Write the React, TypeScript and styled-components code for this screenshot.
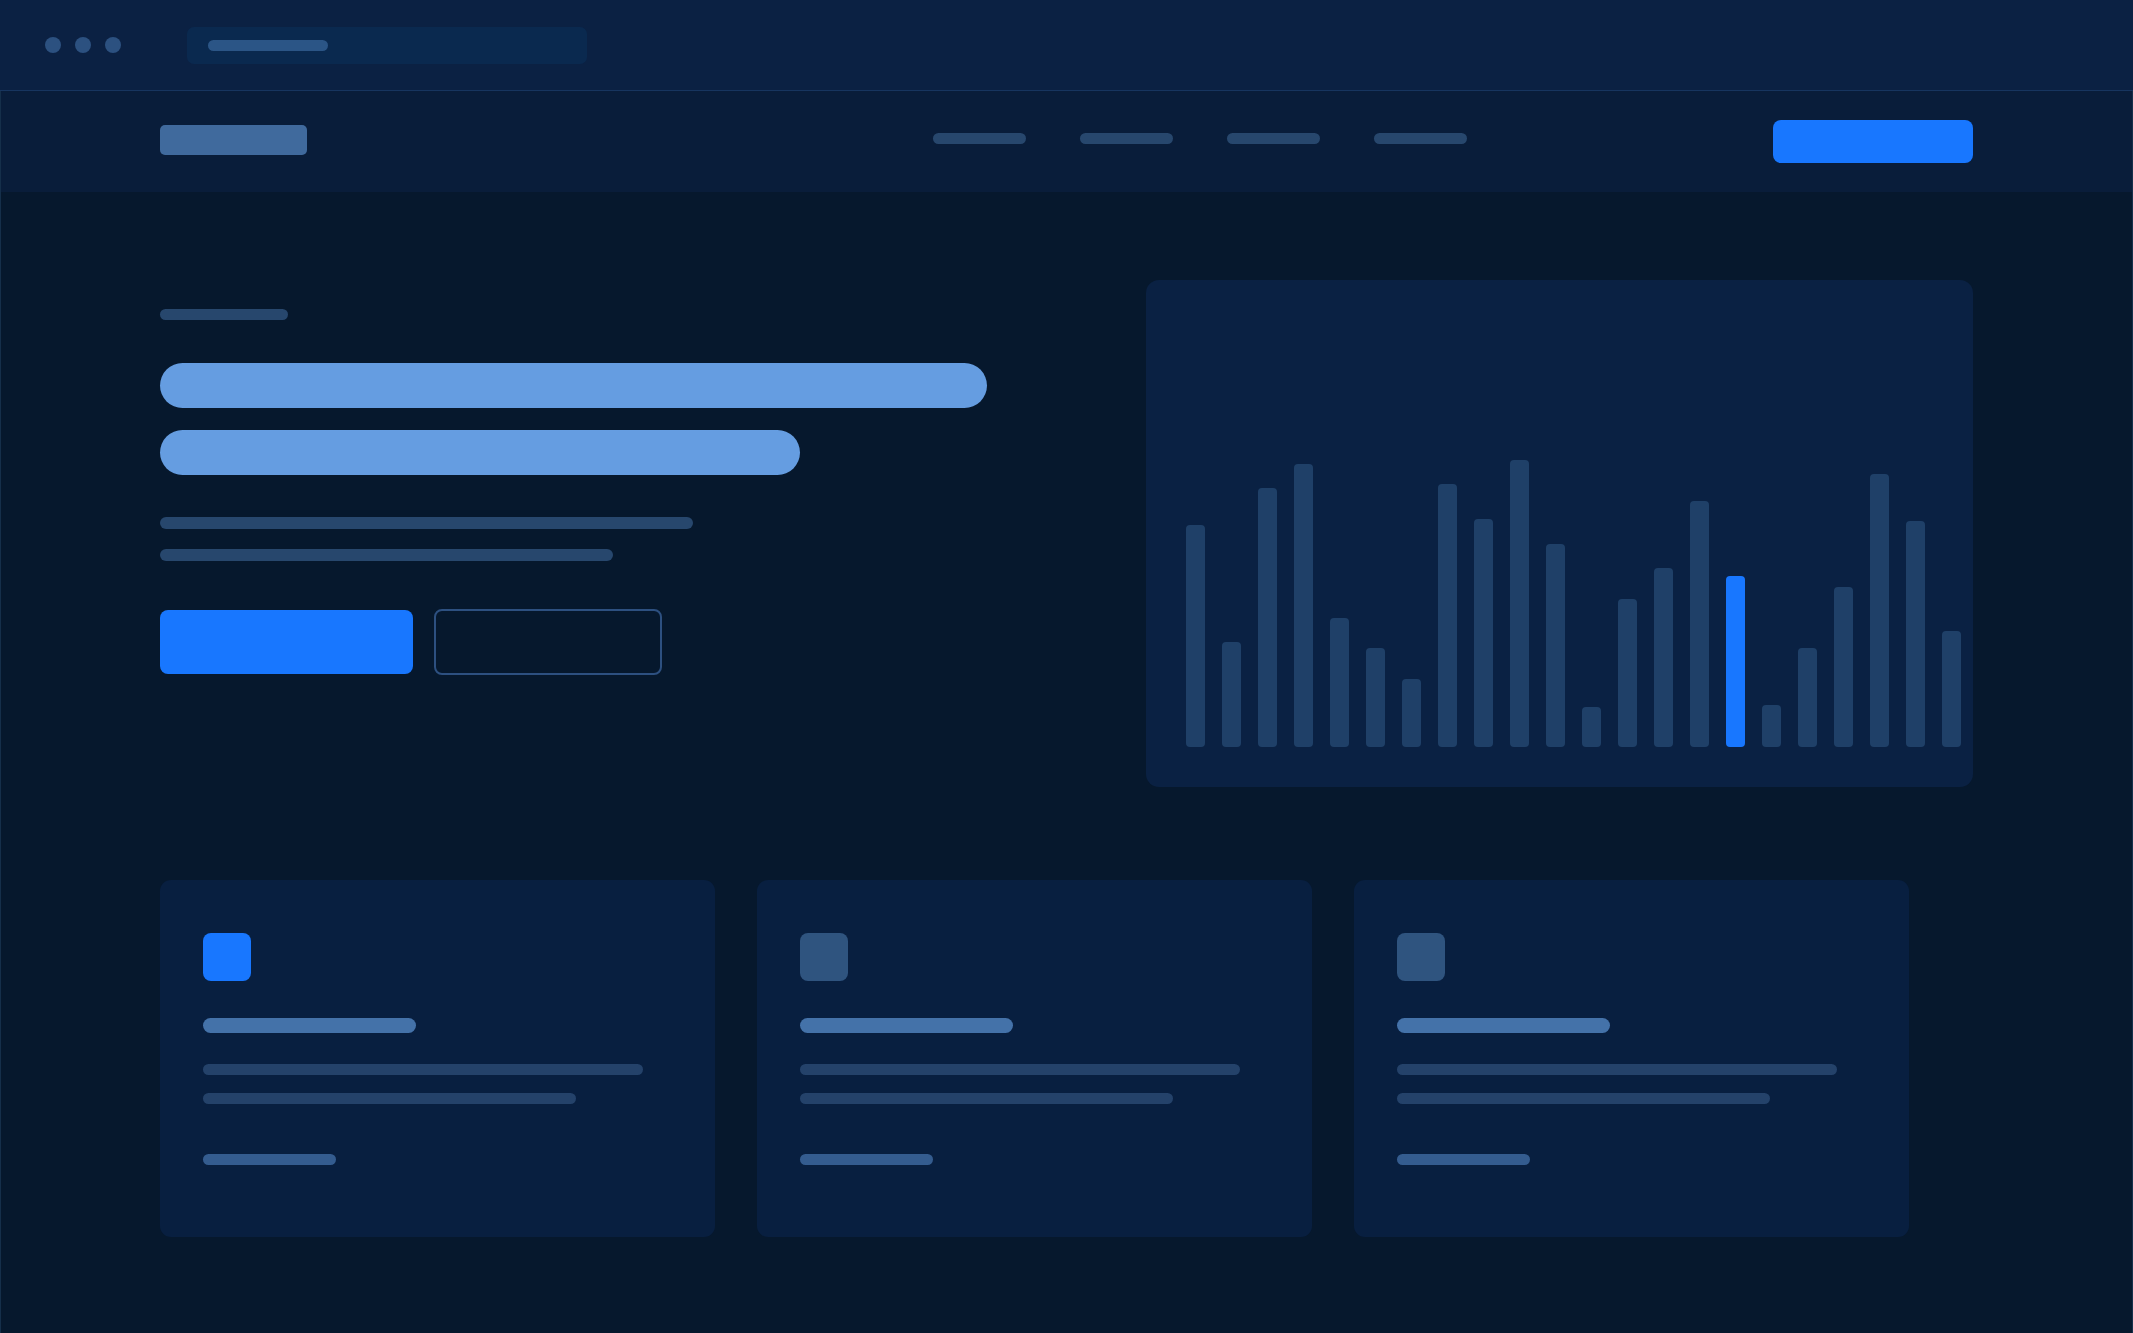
import React from "react";
import styled, { createGlobalStyle } from "styled-components";

const colors = {
  page: "#06182d",
  chrome: "#0b2143",
  divider: "#17355f",
  edge: "#152f4a",
  address: "#0a294f",
  nav: "#091d3a",
  panel: "#0a2143",
  card: "#081f40",
  accent: "#1877ff",
  heading: "#659de1",
  title: "#4472a9",
  logo: "#406a9d",
  link: "#345c8f",
  dot: "#2c5180",
  icon: "#2f547f",
  addressText: "#2b5586",
  muted: "#27476d",
  cardText: "#24426a",
  column: "#1f4068",
  outline: "#2d5080",
};

const GlobalStyle = createGlobalStyle`
  *, *::before, *::after { box-sizing: border-box; }
  body {
    margin: 0;
    background: ${colors.page};
    font-family: Inter, "Liberation Sans", sans-serif;
  }
  h1, h2, p, ul { margin: 0; padding: 0; }
`;

const Page = styled.div`
  min-height: 100vh;
  border: 1px solid ${colors.edge};
  border-top: 0;
  border-bottom: 0;
`;

const Chrome = styled.header`
  display: flex;
  align-items: center;
  height: 91px;
  margin: 0 -1px;
  padding: 0 45px;
  gap: 66px;
  background: ${colors.chrome};
  border-bottom: 1px solid ${colors.divider};
`;

const Dots = styled.div`
  display: flex;
  gap: 14px;
`;

const Dot = styled.span`
  width: 16px;
  height: 16px;
  border-radius: 50%;
  background: ${colors.dot};
`;

const Address = styled.label`
  display: flex;
  align-items: center;
  width: 400px;
  height: 37px;
  padding: 0 21px;
  border-radius: 7px;
  background: ${colors.address};
`;

const AddressInput = styled.input`
  flex: 1;
  min-width: 0;
  border: 0;
  outline: 0;
  background: transparent;
`;

const Line = styled.span<{ $width: string; $height?: number; $color?: string }>`
  display: block;
  flex: none;
  width: ${(p) => p.$width};
  max-width: 100%;
  height: ${(p) => p.$height ?? 11}px;
  border-radius: 999px;
  background: ${(p) => p.$color ?? colors.muted};
`;

const Nav = styled.nav`
  display: flex;
  align-items: flex-start;
  height: 101px;
  padding: 29px 159px 0;
  background: ${colors.nav};
`;

const Logo = styled.a`
  width: 147px;
  height: 30px;
  margin-top: 5px;
  border-radius: 5px;
  background: ${colors.logo};
`;

const NavLinks = styled.ul`
  display: flex;
  gap: 54px;
  margin: 13px 306px 0 auto;
  list-style: none;
`;

const NavLink = styled.a`
  display: block;
`;

const Button = styled.button<{ $width: number; $height: number; $outlined?: boolean }>`
  width: ${(p) => p.$width}px;
  height: ${(p) => p.$height}px;
  padding: 0;
  border: ${(p) => (p.$outlined ? `2px solid ${colors.outline}` : "0")};
  border-radius: 8px;
  background: ${(p) => (p.$outlined ? "transparent" : colors.accent)};
  cursor: pointer;
`;

const Hero = styled.section`
  display: grid;
  grid-template-columns: 1fr 1fr;
  gap: 159px;
  padding: 88px 159px 0;
`;

const Intro = styled.div`
  padding-top: 29px;
`;

const Heading = styled.h1`
  display: grid;
  gap: 22px;
  margin-top: 43px;
`;

const Lead = styled.p`
  display: grid;
  gap: 20px;
  margin-top: 42px;
`;

const Actions = styled.div`
  display: flex;
  align-items: center;
  gap: 21px;
  margin-top: 48px;
`;

const Chart = styled.div`
  display: flex;
  align-items: flex-end;
  gap: 17px;
  height: 507px;
  padding: 0 0 40px 40px;
  border-radius: 13px;
  background: ${colors.panel};
`;

const Column = styled.span<{ $active: boolean }>`
  flex: none;
  width: 19px;
  border-radius: 4px;
  background: ${(p) => (p.$active ? colors.accent : colors.column)};
`;

const Cards = styled.section`
  display: grid;
  grid-template-columns: repeat(3, 1fr);
  gap: 42px;
  padding: 93px 223px 96px 159px;
`;

const Card = styled.article`
  height: 357px;
  padding: 53px 43px;
  border-radius: 11px;
  background: ${colors.card};
`;

const CardIcon = styled.div<{ $active: boolean }>`
  width: 48px;
  height: 48px;
  border-radius: 8px;
  background: ${(p) => (p.$active ? colors.accent : colors.icon)};
`;

const CardTitle = styled.h2`
  margin-top: 37px;
`;

const CardText = styled.p`
  display: grid;
  gap: 18px;
  margin-top: 31px;
`;

const CardLink = styled.a`
  display: block;
  width: fit-content;
  margin-top: 50px;
`;

const columns = [
  222, 105, 259, 283, 129, 99, 68, 263, 228, 287, 203,
  40, 148, 179, 246, 171, 42, 99, 160, 273, 226, 116,
];
const activeColumn = 15;

const links = ["Product", "Features", "Pricing", "About"];
const cards = ["First feature", "Second feature", "Third feature"];

export default function App() {
  return (
    <>
      <GlobalStyle />
      <Page>
        <Chrome>
          <Dots>
            <Dot />
            <Dot />
            <Dot />
          </Dots>
          <Address>
            <Line $width="120px" $color={colors.addressText} />
            <AddressInput type="text" aria-label="Address" />
          </Address>
        </Chrome>
        <Nav>
          <Logo href="#" aria-label="Home" />
          <NavLinks>
            {links.map((name) => (
              <li key={name}>
                <NavLink href="#" aria-label={name}>
                  <Line $width="93px" />
                </NavLink>
              </li>
            ))}
          </NavLinks>
          <Button $width={200} $height={43} aria-label="Get started" />
        </Nav>
        <main>
          <Hero>
            <Intro>
              <Line $width="128px" />
              <Heading>
                <Line $width="100%" $height={45} $color={colors.heading} />
                <Line $width="640px" $height={45} $color={colors.heading} />
              </Heading>
              <Lead>
                <Line $width="533px" $height={12} />
                <Line $width="453px" $height={12} />
              </Lead>
              <Actions>
                <Button $width={253} $height={64} aria-label="Start now" />
                <Button $width={228} $height={66} $outlined aria-label="Learn more" />
              </Actions>
            </Intro>
            <Chart role="img" aria-label="Activity chart">
              {columns.map((height, index) => (
                <Column key={index} $active={index === activeColumn} style={{ height }} />
              ))}
            </Chart>
          </Hero>
          <Cards>
            {cards.map((name, index) => (
              <Card key={name}>
                <CardIcon $active={index === 0} />
                <CardTitle aria-label={name}>
                  <Line $width="213px" $height={15} $color={colors.title} />
                </CardTitle>
                <CardText>
                  <Line $width="440px" $color={colors.cardText} />
                  <Line $width="373px" $color={colors.cardText} />
                </CardText>
                <CardLink href="#" aria-label={`Open ${name.toLowerCase()}`}>
                  <Line $width="133px" $color={colors.link} />
                </CardLink>
              </Card>
            ))}
          </Cards>
        </main>
      </Page>
    </>
  );
}
